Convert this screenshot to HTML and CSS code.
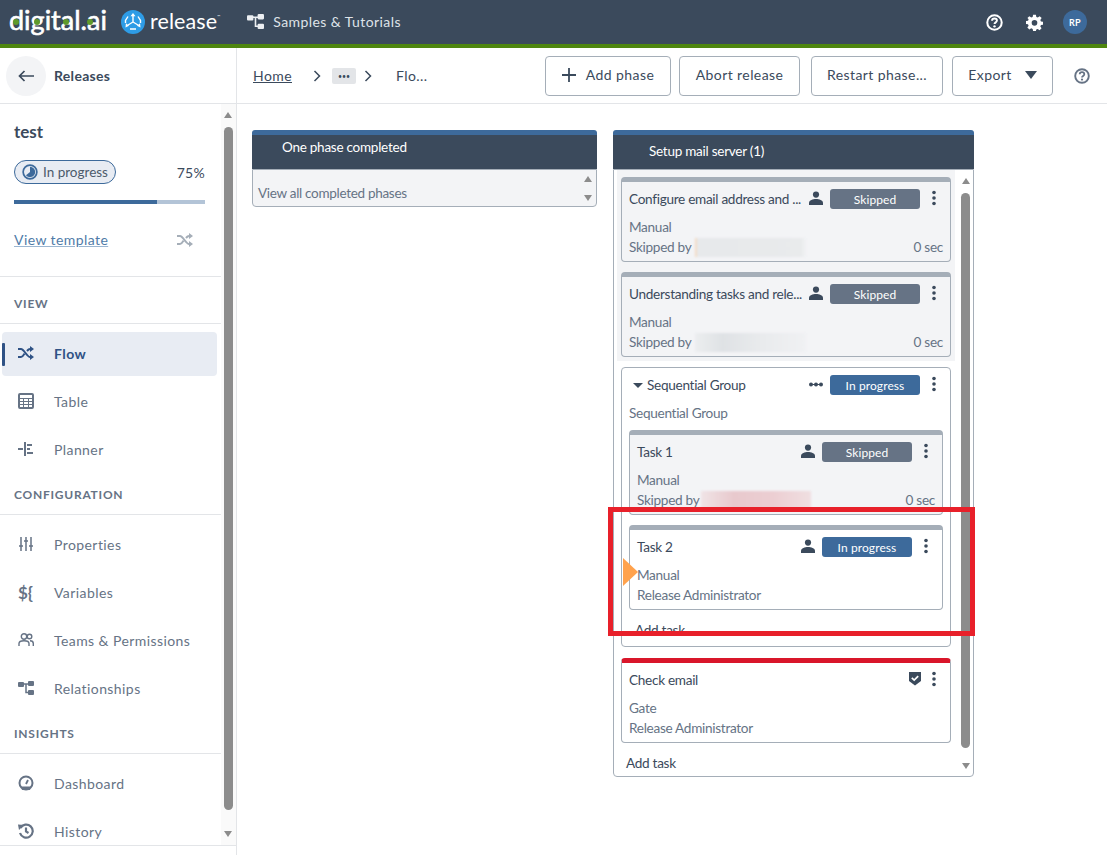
FILE: index.html
```html
<!DOCTYPE html>
<html lang="en">
<head>
<meta charset="utf-8">
<title>Release flow</title>
<link rel="stylesheet" href="styles.css">
</head>
<body>
<svg class="defs" width="0" height="0" aria-hidden="true">
  <symbol id="i-person" viewBox="0 0 14 14"><circle cx="7" cy="3.6" r="3.1"/><path d="M0 14v-2.2C0 9.2 4 8 7 8s7 1.200 7 3.800V14z"/></symbol>
  <symbol id="i-dots" viewBox="0 0 4 16"><circle cx="2" cy="2.500" r="1.800"/><circle cx="2" cy="8" r="1.800"/><circle cx="2" cy="13.500" r="1.800"/></symbol>
  <symbol id="i-shuffle" viewBox="0 0 16 14"><path fill="none" stroke="currentColor" stroke-width="2" d="M0 3h3c3 0 6 8 9 8h1M0 11h3c1.500 0 2.500-1.800 3.500-3.400M9 5c1-1.200 2-2 3-2h1"/><path d="M12 0l4 3-4 3zM12 8l4 3-4 3z"/></symbol>
  <symbol id="i-tree" viewBox="0 0 16 14"><rect x="0" y="1" width="6" height="5" rx="1"/><rect x="10" y="0" width="6" height="5" rx="1"/><rect x="10" y="9" width="6" height="5" rx="1"/><path fill="none" stroke="currentColor" stroke-width="1.500" d="M5 3h6M8 3v8.500h3"/></symbol>
  <symbol id="i-help" viewBox="0 0 16 16"><circle cx="8" cy="8" r="6.800" fill="none" stroke="currentColor" stroke-width="1.900"/><path fill="none" stroke="currentColor" stroke-width="1.800" d="M5.700 6.300C5.700 4.900 6.800 4.200 8 4.200s2.300.8 2.300 2c0 1.700-2.300 1.700-2.300 3.300"/><circle cx="8" cy="11.600" r="1.100"/></symbol>
</svg>

<header class="topbar">
  <div class="logo-digital">digital.ai<i class="bowl b1"></i><i class="bowl b2"></i><i class="bowl b3"></i><i class="bowl b4"></i></div>
  <svg class="logo-mark" viewBox="0 0 24 24">
    <circle cx="12" cy="12" r="12" fill="#2e9ce6"/>
    <g fill="none" stroke="#fff" stroke-width="1.400">
      <path d="M12 6v6M12 12l-5 3M12 12l5 3"/>
      <path d="M7 6.500L4.500 10.500V13M17 6.500l2.500 4V13M9 19h6" />
    </g>
    <path fill="#fff" d="M12 3l2.500 3.200h-5zM4.500 17.500l.4-4.200 3.200 2.400zM19.500 17.500l-.4-4.200-3.200 2.400z"/>
  </svg>
  <div class="logo-product">release<sup class="tm">™</sup></div>
  <a class="samples"><svg class="ico-tree"><use href="#i-tree"/></svg>Samples &amp; Tutorials</a>
  <div class="top-actions">
    <svg class="ico-top"><use href="#i-help"/></svg>
    <svg class="ico-top" viewBox="0 0 24 24"><path fill-rule="evenodd" d="M10 1h4l.6 3.100 2 .8L19.300 3l2.800 2.800-1.900 2.700.9 2 3 .5v4l-3 .6-.9 2 1.800 2.600-2.800 2.800-2.700-1.800-2 .8L14 24h-4l-.6-3-2-.8L4.700 22l-2.800-2.800 1.800-2.600-.9-2-2.900-.6v-4l3-.5.8-2L2 5.800 4.700 3l2.700 1.900 2-.8zM12 8.500a4 4 0 1 0 0 8 4 4 0 0 0 0-8z"/></svg>
    <span class="avatar">RP</span>
  </div>
</header>

<div class="shell">
  <aside class="sidebar">
    <div class="side-head">
      <span class="back"><svg viewBox="0 0 16 12"><path fill="none" stroke="currentColor" stroke-width="1.700" d="M16 6H1.500M6.500 1L1.500 6l5 5"/></svg></span>
      <span class="side-head-label">Releases</span>
    </div>
    <div class="side-scroll">
      <div class="side-content">
        <div class="release-info">
          <h1 class="release-name">test</h1>
          <div class="status-row">
            <span class="status-pill"><svg viewBox="0 0 14 14"><circle cx="7" cy="7" r="6" fill="none" stroke="currentColor" stroke-width="1.500"/><path d="M7 2.500A4.500 4.500 0 1 1 3.500 9.800L7 7z"/></svg>In progress</span>
            <span class="percent">75%</span>
          </div>
          <div class="progress"><div class="progress-fill"></div></div>
          <div class="template-row"><a class="template-link">View template</a><svg class="ico-shuffle-muted"><use href="#i-shuffle"/></svg></div>
        </div>
        <div class="section-title first">VIEW</div>
        <nav class="nav">
          <a class="nav-item active"><svg class="nav-ico"><use href="#i-shuffle"/></svg>Flow</a>
          <a class="nav-item"><svg class="nav-ico" viewBox="0 0 16 16"><rect x="1" y="1" width="14" height="14" rx="1" fill="none" stroke="currentColor" stroke-width="2"/><path fill="none" stroke="currentColor" d="M1 5.500h14M1 8.500h14M1 11.500h14M5.500 5v10M10.500 5v10"/></svg>Table</a>
          <a class="nav-item"><svg class="nav-ico" viewBox="0 0 16 16"><path fill="none" stroke="currentColor" stroke-width="2" d="M7 1v14M0 8h5M9 4h5M9 8h3M9 12h6"/></svg>Planner</a>
        </nav>
        <div class="section-title compact">CONFIGURATION</div>
        <nav class="nav">
          <a class="nav-item"><svg class="nav-ico" viewBox="0 0 16 16"><path fill="none" stroke="currentColor" stroke-width="1.500" d="M3 1v14M8 1v14M13 1v14M1 10h4M6 5h4M11 10h4"/></svg>Properties</a>
          <a class="nav-item"><span class="nav-glyph">${</span>Variables</a>
          <a class="nav-item"><svg class="nav-ico" viewBox="0 0 16 16"><g fill="none" stroke="currentColor" stroke-width="1.400"><circle cx="6" cy="4.500" r="2.700"/><circle cx="11.500" cy="4.500" r="2.300"/><path d="M1 14v-2.500C1 9.500 3 8.800 6 8.800s5 .7 5 2.700V14M12 8.800c2 0 3.300.8 3.300 2.700V14"/></g></svg>Teams &amp; Permissions</a>
          <a class="nav-item"><svg class="nav-ico"><use href="#i-tree"/></svg>Relationships</a>
        </nav>
        <div class="section-title compact2">INSIGHTS</div>
        <nav class="nav">
          <a class="nav-item"><svg class="nav-ico" viewBox="0 0 16 16"><circle cx="8" cy="8" r="6.500" fill="none" stroke="currentColor" stroke-width="2"/><path d="M3 11.500h10L12 15H4z"/><path fill="none" stroke="currentColor" stroke-width="1.800" d="M8 9l2-4"/></svg>Dashboard</a>
          <a class="nav-item"><svg class="nav-ico" viewBox="0 0 16 16"><path fill="none" stroke="currentColor" stroke-width="2.200" d="M2.500 5A6.500 6.500 0 1 1 2 10M8 4.500V8.500l2.500 1.500"/><path d="M0 1.500L6 2 1 7z"/></svg>History</a>
        </nav>
      </div>
      <div class="scrollbar side-bar"><i class="arrow up"></i><i class="thumb"></i><i class="arrow down"></i></div>
    </div>
    <div class="side-foot"></div>
  </aside>

  <main class="main">
    <div class="toolbar">
      <div class="crumbs">
        <a class="crumb-home">Home</a>
        <svg class="chev" viewBox="0 0 8 12"><path fill="none" stroke="currentColor" stroke-width="1.500" d="M1.500 1l5 5-5 5"/></svg>
        <span class="crumb-more">•••</span>
        <svg class="chev" viewBox="0 0 8 12"><path fill="none" stroke="currentColor" stroke-width="1.500" d="M1.500 1l5 5-5 5"/></svg>
        <span class="crumb-last">Flo...</span>
      </div>
      <div class="actions">
        <button class="btn btn-add"><svg class="plus" viewBox="0 0 14 14"><path stroke="currentColor" stroke-width="1.800" d="M7 0v14M0 7h14"/></svg>Add phase</button>
        <button class="btn btn-abort">Abort release</button>
        <button class="btn btn-restart">Restart phase...</button>
        <button class="btn btn-export">Export<i class="caret"></i></button>
        <svg class="ico-help"><use href="#i-help"/></svg>
      </div>
    </div>

    <div class="board">
      <section class="phase phase-done">
        <div class="phase-head"><span class="phase-name">One phase completed</span></div>
        <div class="phase-body done-body">
          <span class="done-link">View all completed phases</span>
          <div class="scrollbar mini"><i class="arrow up"></i><i class="arrow down"></i></div>
        </div>
      </section>

      <section class="phase phase-active">
        <div class="phase-head"><span class="phase-name">Setup mail server (1)</span></div>
        <div class="phase-body active-body">
          <div class="task-list">
            <div class="skipped-zone">
              <article class="card muted">
                <div class="card-top"><span class="card-title">Configure email address and ...</span><svg class="ico-person"><use href="#i-person"/></svg><span class="badge gray">Skipped</span><svg class="ico-dots"><use href="#i-dots"/></svg></div>
                <div class="card-line">Manual</div>
                <div class="card-line split"><span>Skipped by</span><span class="redact r1"></span><span class="dur">0 sec</span></div>
              </article>
              <article class="card muted">
                <div class="card-top"><span class="card-title">Understanding tasks and rele...</span><svg class="ico-person"><use href="#i-person"/></svg><span class="badge gray">Skipped</span><svg class="ico-dots"><use href="#i-dots"/></svg></div>
                <div class="card-line">Manual</div>
                <div class="card-line split"><span>Skipped by</span><span class="redact r2"></span><span class="dur">0 sec</span></div>
              </article>
            </div>

            <div class="group">
              <div class="card-top group-top"><i class="tri"></i><span class="card-title">Sequential Group</span><svg class="seq-dots" viewBox="0 0 14 5"><path stroke="currentColor" d="M1 2.500h12"/><circle cx="2" cy="2.500" r="2"/><circle cx="7" cy="2.500" r="2"/><circle cx="12" cy="2.500" r="2"/></svg><span class="badge blue">In progress</span><svg class="ico-dots"><use href="#i-dots"/></svg></div>
              <div class="card-line group-sub">Sequential Group</div>
              <article class="card muted nested">
                <div class="card-top"><span class="card-title">Task 1</span><svg class="ico-person"><use href="#i-person"/></svg><span class="badge gray">Skipped</span><svg class="ico-dots"><use href="#i-dots"/></svg></div>
                <div class="card-line">Manual</div>
                <div class="card-line split"><span>Skipped by</span><span class="redact r3"></span><span class="dur">0 sec</span></div>
              </article>
              <article class="card nested second">
                <i class="marker"></i>
                <div class="card-top"><span class="card-title">Task 2</span><svg class="ico-person"><use href="#i-person"/></svg><span class="badge blue">In progress</span><svg class="ico-dots"><use href="#i-dots"/></svg></div>
                <div class="card-line">Manual</div>
                <div class="card-line">Release Administrator</div>
              </article>
              <div class="add-nested">Add task</div>
            </div>

            <article class="card gate">
              <div class="card-top"><span class="card-title">Check email</span><svg class="ico-shield" viewBox="0 0 14 15"><path d="M1 1h12v9l-6 4.500L1 10z"/><path fill="none" stroke="#fff" stroke-width="1.700" d="M3.800 6.800l2.400 2.300 4-4"/></svg><svg class="ico-dots"><use href="#i-dots"/></svg></div>
              <div class="card-line">Gate</div>
              <div class="card-line">Release Administrator</div>
            </article>
            <div class="add-task">Add task</div>
          </div>
          <div class="scrollbar list-bar"><i class="arrow up"></i><i class="thumb"></i><i class="arrow down"></i></div>
        </div>
      </section>
    </div>
  </main>
</div>
<div class="highlight"></div>
</body>
</html>
```
FILE: styles.css
```css
* { box-sizing: border-box; }
html, body { margin: 0; height: 855px; overflow: hidden; }
body { font-family: Lato, "Liberation Sans", sans-serif; font-size: 14px; color: #3b4a5c; background: #fff; position: relative; }
.defs { position: absolute; }
svg { fill: currentColor; display: block; flex: none; }
i { display: block; }
button { font: inherit; color: inherit; }

/* top bar */
.topbar { height: 48px; background: #3b4a5c; border-bottom: 4px solid #4e860f; display: flex; align-items: center; color: #fff; padding-left: 9px; }
.logo-digital { position: relative; width: 98px; height: 44px; font-size: 27px; line-height: 39px; font-weight: 400; -webkit-text-stroke: .6px #fff; letter-spacing: 0; white-space: nowrap; }
.bowl { position: absolute; width: 6px; height: 6px; border-radius: 50%; background: #5f9a2b; top: 19px; }
.b1 { left: 4px; }
.b2 { left: 25px; }
.b3 { left: 54px; }
.b4 { left: 78px; }
.logo-mark { width: 24px; height: 24px; margin-left: 14px; }
.logo-product { font-size: 21.500px; line-height: 42px; height: 44px; margin-left: 5px; letter-spacing: .1px; white-space: nowrap; }
.tm { font-size: 4px; vertical-align: 11px; line-height: 0; }
.samples { display: flex; align-items: center; margin-left: 27px; font-size: 14px; letter-spacing: .42px; color: #dfe3e8; padding-bottom: 2px; }
.ico-tree { width: 17px; height: 15px; margin-right: 9px; color: #eceff2; }
.top-actions { margin-left: auto; display: flex; align-items: center; padding-right: 20px; }
.ico-top { width: 17px; height: 17px; margin-right: 23px; }
.ico-top + .ico-top { margin-right: 20px; }
.avatar { width: 24px; height: 24px; border-radius: 50%; background: #3d6a9b; color: #fff; font-size: 9px; font-weight: 700; display: flex; align-items: center; justify-content: center; letter-spacing: .3px; }

.shell { display: flex; height: 807px; }

/* sidebar */
.sidebar { width: 237px; flex: none; border-right: 1px solid #e3e5e8; display: flex; flex-direction: column; }
.side-head { height: 56px; flex: none; border-bottom: 1px solid #e3e5e8; display: flex; align-items: center; padding-left: 6px; }
.back { width: 40px; height: 40px; border-radius: 50%; background: #f3f4f6; display: flex; align-items: center; justify-content: center; color: #3b4a5c; }
.back svg { width: 16px; height: 12px; }
.side-head-label { margin-left: 8px; font-weight: 700; font-size: 14px; letter-spacing: .3px; }
.side-scroll { flex: 1; min-height: 0; display: flex; overflow: hidden; }
.side-content { width: 221px; flex: none; height: 741px; overflow: hidden; }
.release-info { padding: 18px 16px 0 14px; height: 173px; border-bottom: 1px solid #e3e5e8; }
.release-name { margin: 0; font-size: 17px; line-height: 20px; font-weight: 700; color: #3b4a5c; }
.status-row { display: flex; align-items: center; justify-content: space-between; margin-top: 18px; }
.status-pill { display: flex; align-items: center; height: 24px; width: 102px; border: 1px solid #3d6a9b; border-radius: 12px; background: #e8ecf3; padding-left: 7px; color: #4c5a6b; font-size: 13.500px; }
.status-pill svg { width: 16px; height: 16px; margin-right: 5px; color: #3d6a9b; }
.percent { font-size: 14px; letter-spacing: .3px; }
.progress { height: 4px; background: #b3c4d7; margin-top: 16px; }
.progress-fill { width: 75%; height: 100%; background: #3d6a9b; }
.template-row { display: flex; align-items: center; justify-content: space-between; margin-top: 26px; padding-right: 12px; }
.template-link { color: #4f7ba8; text-decoration: underline; text-decoration-color: #9bb6d1; letter-spacing: .42px; font-size: 14px; line-height: 20px; }
.ico-shuffle-muted { width: 16px; height: 14px; color: #a5aeb8; }
.section-title { font-size: 12px; font-weight: 700; letter-spacing: .75px; color: #667385; padding-left: 14px; border-bottom: 1px solid #e3e5e8; line-height: 15px; padding-bottom: 12px; }
.section-title.first { padding-top: 19px; }
.section-title.compact { margin-top: 15px; }
.section-title.compact2 { margin-top: 15px; }
.nav { padding: 8px 4px 0 2px; display: flex; flex-direction: column; gap: 4px; }
.nav-item { height: 44px; display: flex; align-items: center; padding: 0 0 2px 16px; color: #667385; letter-spacing: .42px; font-size: 14px; border-radius: 4px; position: relative; flex: none; }
.nav-item.active { background: #e8ecf3; color: #2f5285; font-weight: 700; }
.nav-item.active::before { content: ""; position: absolute; left: 0; top: 11px; width: 3px; height: 23px; background: #2f5285; border-radius: 1px; }
.nav-ico { width: 16px; height: 14px; margin-right: 20px; }
.nav-item .nav-ico[viewBox="0 0 16 16"] { height: 16px; }
.nav-glyph { width: 16px; margin-right: 20px; font-size: 17px; letter-spacing: 0; font-weight: 700; }

.scrollbar { position: relative; }
.arrow { width: 0; height: 0; border-left: 4.500px solid transparent; border-right: 4.500px solid transparent; position: absolute; left: 50%; margin-left: -4.500px; }
.arrow.up { border-bottom: 6px solid #8c8c8c; top: 0; }
.arrow.down { border-top: 6px solid #8c8c8c; bottom: 0; }
.thumb { position: absolute; left: 50%; border-radius: 5px; background: #8c8c8c; }
.side-bar { width: 15px; height: 741px; background: #fafafa; }
.side-bar .arrow.up { top: 8px; }
.side-bar .arrow.down { bottom: 8px; }
.side-bar .thumb { width: 9px; margin-left: -5px; top: 23px; height: 683px; }
.side-foot { height: 10px; flex: none; border-top: 1px solid #e3e5e8; }

/* main */
.main { flex: 1; min-width: 0; display: flex; flex-direction: column; }
.toolbar { height: 56px; flex: none; border-bottom: 1px solid #e3e5e8; display: flex; align-items: center; padding-left: 16px; }
.crumbs { display: flex; align-items: center; width: 292px; }
.crumb-home { text-decoration: underline; letter-spacing: .42px; }
.chev { width: 8px; height: 12px; color: #3b4a5c; }
.crumbs .chev:nth-of-type(1) { margin-left: 21px; }
.crumb-more { width: 24px; height: 16px; margin-left: 11px; background: #e3e5e8; border-radius: 2px; font-size: 7px; letter-spacing: 0; display: flex; align-items: center; justify-content: center; }
.crumbs .crumb-more + .chev { margin-left: 8px; }
.crumb-last { margin-left: 24px; letter-spacing: .42px; }
.actions { display: flex; align-items: center; }
.btn { height: 40px; background: #fff; border: 1px solid #a5aeb8; border-radius: 4px; display: flex; align-items: center; justify-content: center; letter-spacing: .42px; font-size: 14px; padding: 0 0 2px; margin-right: 8px; }
.btn-add { width: 126px; }
.btn-abort { width: 121px; margin-right: 11px; }
.btn-restart { width: 132px; margin-right: 9px; }
.btn-export { width: 101px; }
.plus { width: 14px; height: 14px; margin-right: 10px; }
.caret { width: 0; height: 0; border-left: 6.500px solid transparent; border-right: 6.500px solid transparent; border-top: 8px solid #3b4a5c; margin-left: 13px; }
.ico-help { width: 16px; height: 16px; margin-left: 13px; color: #667385; }

/* board */
.board { flex: 1; min-height: 0; display: flex; align-items: flex-start; gap: 16px; padding: 26px 0 0 15px; }
.phase { display: flex; flex-direction: column; }
.phase-done { width: 345px; }
.phase-active { width: 361px; }
.phase-head { height: 39px; background: #3b4a5c; border-top: 5px solid #3d6a9b; border-radius: 3px 3px 0 0; color: #fff; }
.phase-name { display: block; padding-left: 30px; font-size: 13.500px; line-height: 18px; letter-spacing: -.25px; }
.phase-done .phase-name { padding-top: 3px; }
.phase-active .phase-name { padding-left: 36px; padding-top: 7px; }
.phase-body { border: 1px solid #a5aeb8; border-radius: 0 0 4px 4px; position: relative; }
.done-body { height: 38px; background: #f3f4f6; padding: 0 0 2px 5px; display: flex; align-items: flex-end; justify-content: space-between; color: #667385; line-height: 22px; font-size: 13.500px; letter-spacing: -.3px; }
.mini { width: 16px; height: 36px; align-self: flex-start; }
.mini .arrow.up { top: 6px; }
.mini .arrow.down { bottom: 5px; }
.active-body { height: 608px; display: flex; }
.task-list { width: 344px; flex: none; padding: 0 3px; }
.skipped-zone { background: #f3f4f6; padding: 7px 4px 4px; margin-bottom: 6px; display: flex; flex-direction: column; gap: 10px; }
.list-bar { width: 14px; height: 100%; margin-left: 1px; }
.list-bar .arrow.up { top: 8px; }
.list-bar .arrow.down { bottom: 7px; }
.list-bar .thumb { width: 9px; margin-left: -5px; top: 23px; height: 555px; }

.card { height: 85px; border: 1px solid #a5aeb8; border-top: 5px solid #a5aeb8; border-radius: 4px; background: #fff; padding: 5px 7px 0; position: relative; }
.card.muted { background: #f3f4f6; }
.card-top { height: 24px; display: flex; align-items: center; }
.card-title { flex: 1; min-width: 0; white-space: nowrap; color: #3b4a5c; font-size: 13.600px; letter-spacing: -.3px; line-height: 20px; }
.ico-person { width: 14px; height: 14px; margin: -3px 7px 0 3px; color: #3b4a5c; }
.badge { width: 90px; height: 20px; border-radius: 3px; color: #fff; font-size: 12px; display: flex; align-items: center; justify-content: center; letter-spacing: .1px; }
.gray { background: #667385; }
.blue { background: #3d6a9b; }
.ico-dots { width: 4px; height: 16px; margin: -2px 7px 0 12px; color: #3b4a5c; }
.card-line { color: #667385; font-size: 13.600px; line-height: 20px; letter-spacing: -.3px; }
.card-top + .card-line { margin-top: 6px; }
.split { display: flex; align-items: center; }
.dur { margin-left: auto; }
.redact { width: 111px; height: 19px; margin-left: 4px; filter: blur(1px); }
.r1 { background: linear-gradient(90deg, #f3dcc6 0 2px, #e7e9eb 2px, #e9ebec 95%, #f1f2f4); }
.r2 { background: linear-gradient(90deg, #eceeef, #dfe2e5 25%, #e9ebed 60%, #f0f1f3); }
.r3 { background: linear-gradient(90deg, #f0e4e6, #e8c9cd 30%, #ecced2 65%, #f0dfe1); margin-left: 2px; width: 110px; }

.group { height: 280px; border: 1px solid #a5aeb8; border-radius: 4px; margin: 0 4px 11px; padding: 5px 7px 0; background: #fff; overflow: hidden; }
.group-top { padding-left: 4px; }
.tri { width: 0; height: 0; border-left: 5px solid transparent; border-right: 5px solid transparent; border-top: 5px solid #3b4a5c; margin-right: 4px; }
.seq-dots { width: 14px; height: 5px; margin: -1px 7px 0 0; color: #3b4a5c; }
.nested { margin-top: 7px; height: 85px; overflow: visible; }
.nested.second { margin-top: 10px; }
.marker { position: absolute; left: -7px; top: 28px; width: 0; height: 0; border-top: 14px solid transparent; border-bottom: 14px solid transparent; border-left: 15px solid #ffa24d; }
.add-nested { margin: 10px 0 0 6px; color: #3b4a5c; line-height: 20px; font-size: 13.600px; letter-spacing: -.3px; }
.gate { margin: 0 4px; border-top-color: #d9162a; }
.gate .ico-dots { margin-left: 10px; margin-right: 7px; }
.ico-shield { width: 14px; height: 15px; margin-top: -3px; color: #3b4a5c; }
.add-task { margin: 10px 0 0 9px; line-height: 20px; font-size: 13.600px; letter-spacing: -.3px; color: #3b4a5c; }

.highlight { position: absolute; left: 608px; top: 507px; width: 367px; height: 129px; border: 5px solid #e8202a; pointer-events: none; }
```
